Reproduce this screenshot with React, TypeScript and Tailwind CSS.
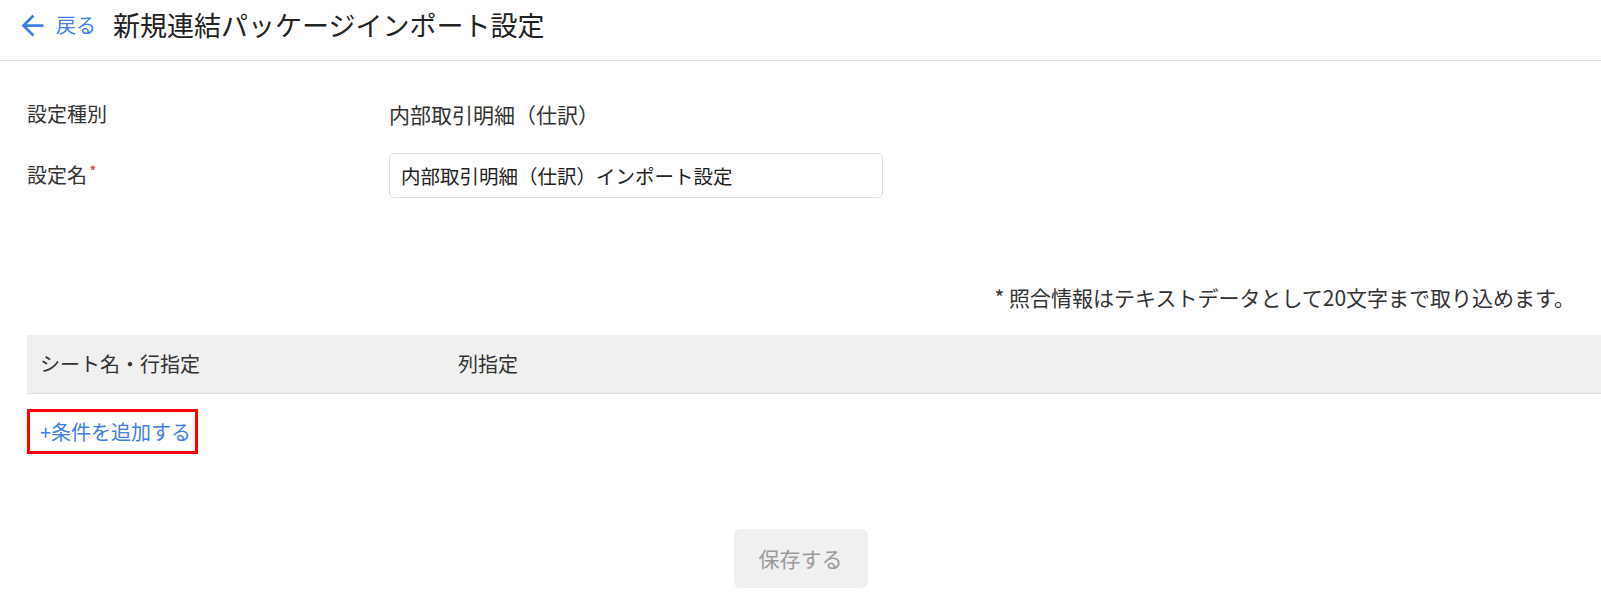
const FONT = { fontFamily: '"Noto Sans CJK JP", "Noto Sans", sans-serif' }

function BackArrow() {
  return (
    <svg width="33" height="33" viewBox="0 0 24 24" fill="currentColor" aria-hidden>
      <path d="M20 11H7.83l5.59-5.59L12 4l-8 8 8 8 1.41-1.41L7.83 13H20v-2z" />
    </svg>
  )
}

export default function App() {
  return (
    <div className="min-h-[595px] w-[1601px] bg-white text-[#333333]" style={FONT}>
      {/* header */}
      <header className="flex h-[61px] items-start border-b border-[#e2e2e2] pl-[16px] pt-[9px]">
        <button className="flex h-[32px] items-center gap-[7px] text-[20px] leading-[32px] text-[#3f80e6]">
          <BackArrow />
          <span>戻る</span>
        </button>
        <h1 className="ml-[17px] text-[27px] leading-[32px] text-[#222222]">新規連結パッケージインポート設定</h1>
      </header>

      <main className="pl-[27px]">
        <div className="mt-[38px] flex items-center leading-[30px]">
          <div className="w-[362px] text-[20px]">設定種別</div>
          <div className="text-[21px]">内部取引明細（仕訳）</div>
        </div>

        <div className="mt-[24px] flex items-center">
          <div className="w-[362px] text-[20px] leading-[30px]">
            設定名<span className="relative -top-[5px] ml-[2px] text-[16px] text-[#e53935]">*</span>
          </div>
          <input
            className="h-[45px] w-[494px] rounded-[5px] border border-[#dcdcdc] px-[11px] text-[19.5px] text-[#222222] outline-none"
            defaultValue="内部取引明細（仕訳）インポート設定"
          />
        </div>

        <p className="mt-[84px] pr-[26px] text-right text-[21px] leading-[30px]">* 照合情報はテキストデータとして20文字まで取り込めます。</p>

        <div className="mt-[23px] flex h-[59px] items-center border-b border-[#dddddd] bg-[#f0f0f0] text-[20px]">
          <div className="w-[431px] pl-[13px]">シート名・行指定</div>
          <div>列指定</div>
        </div>

        <div className="mt-[15px] inline-block border-[3px] border-[#ff0000] py-[4px] pl-[10px] pr-[4px] text-[20px] leading-[31px] text-[#3f80e6]">
          +条件を追加する
        </div>

        <div className="mt-[75px] flex justify-center pr-[27px]">
          <button className="h-[59px] w-[134px] rounded-[6px] bg-[#f0f0f0] text-[21px] text-[#9a9a9a]">保存する</button>
        </div>
      </main>
    </div>
  )
}
